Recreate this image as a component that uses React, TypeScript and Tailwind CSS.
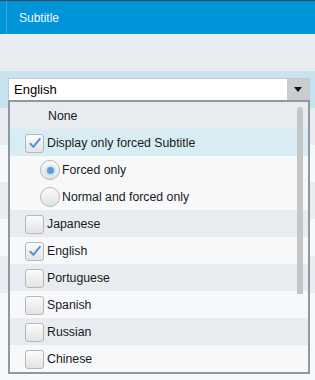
import React from "react";

const font = { fontFamily: '"Liberation Sans", Arial, sans-serif' };

function Check() {
  return (
    <svg width="14" height="14" viewBox="0 0 14 14" className="block">
      <path d="M2.4 7.8 L5.4 10.9 L11.8 2.8" fill="none" stroke="#5592cc" strokeWidth="2" strokeLinecap="round" strokeLinejoin="round" />
    </svg>
  );
}

function Box({ checked }: { checked?: boolean }) {
  return (
    <div className="w-[19px] h-[19px] shrink-0 rounded-[3px] border border-[#b4b8bc] bg-gradient-to-b from-[#fbfbfb] to-[#e4e4e4] flex items-center justify-center">
      {checked ? <Check /> : null}
    </div>
  );
}

function Radio({ on }: { on?: boolean }) {
  return (
    <div className="w-[20px] h-[20px] shrink-0 rounded-full border border-[#b4b8bc] bg-gradient-to-b from-[#fbfbfb] to-[#e2e2e2] flex items-center justify-center">
      {on ? <div className="w-[7px] h-[7px] rounded-full bg-[#5b9cd6] ring-2 ring-[#cfe3f3]" /> : null}
    </div>
  );
}

type Row = { kind: "none" | "box" | "radio"; label: string; checked?: boolean; bg: string };

const rows: Row[] = [
  { kind: "none", label: "None", bg: "bg-[#e8ebf0]" },
  { kind: "box", label: "Display only forced Subtitle", checked: true, bg: "bg-[#d8ecf4]" },
  { kind: "radio", label: "Forced only", checked: true, bg: "bg-[#f7f8fa]" },
  { kind: "radio", label: "Normal and forced only", bg: "bg-[#f7f8fa]" },
  { kind: "box", label: "Japanese", bg: "bg-[#e8ebf0]" },
  { kind: "box", label: "English", checked: true, bg: "bg-[#f7f8fa]" },
  { kind: "box", label: "Portuguese", bg: "bg-[#e8ebf0]" },
  { kind: "box", label: "Spanish", bg: "bg-[#f7f8fa]" },
  { kind: "box", label: "Russian", bg: "bg-[#e8ebf0]" },
  { kind: "box", label: "Chinese", bg: "bg-[#f7f8fa]" },
];

export default function App() {
  return (
    <div className="relative w-[315px] h-[380px] overflow-hidden bg-[#f7f8fa] text-[12.3px] text-[#1a1a1a]" style={font}>
      <div className="h-[1px] bg-[#3b4c58]" />
      <div className="h-[33px] bg-[#0094d8] flex">
        <div className="w-[7px] border-r border-[#3aa9e0]" />
        <div className="pl-[12px] flex items-center text-[#f2f9fd] text-[12px]">Subtitle</div>
      </div>
      <div className="h-[37px] bg-[#e9ecf0]" />
      <div className="h-[37px] bg-[#c9e2ef] pt-[7px] pl-[8px] pr-[5px]">
        <div className="h-[23px] bg-white border border-[#c2c9cf] flex">
          <div className="flex-1 pl-[5px] flex items-center text-[13px] text-black">English</div>
          <div className="w-[22px] bg-[#c9cdd0] flex items-center justify-center">
            <svg width="8" height="5" viewBox="0 0 8 5"><path d="M0 0 H8 L4 5 Z" fill="#111" /></svg>
          </div>
        </div>
      </div>
      <div className="h-[37px] bg-[#e9ecf0]" />
      <div className="h-[37px] bg-[#f7f8fa]" />
      <div className="h-[37px] bg-[#e9ecf0]" />
      <div className="h-[37px] bg-[#f7f8fa]" />
      <div className="h-[37px] bg-[#e9ecf0]" />
      <div className="h-[37px] bg-[#f7f8fa]" />

      <div className="absolute left-[8px] top-[100px] w-[302px] border-2 border-[#8f989f] bg-[#f7f8fa]">
        {rows.map((r, i) => (
          <div key={i} className={`h-[27px] flex items-center pt-[1px] ${r.bg}`}>
            {r.kind === "none" ? (
              <div className="pl-[38px]">{r.label}</div>
            ) : r.kind === "box" ? (
              <div className="pl-[15px] flex items-center gap-[3px]">
                <Box checked={r.checked} />
                <span>{r.label}</span>
              </div>
            ) : (
              <div className="pl-[30px] flex items-center gap-[2px]">
                <Radio on={r.checked} />
                <span>{r.label}</span>
              </div>
            )}
          </div>
        ))}
        <div className="absolute right-[5px] top-[5px] w-[6px] h-[187px] rounded-t-[3px] rounded-b-[1px] bg-[#c4c5c6]" />
      </div>
    </div>
  );
}
